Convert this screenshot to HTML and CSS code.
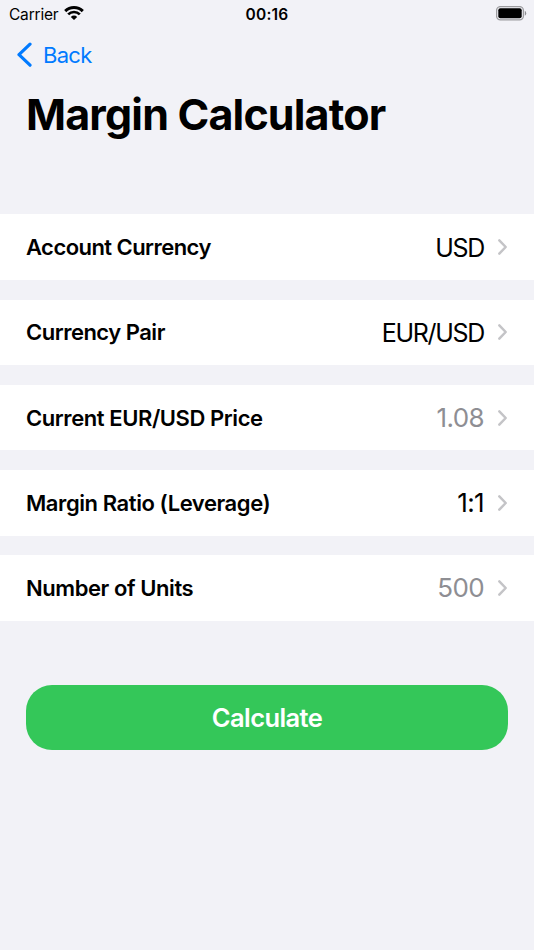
FILE: index.html
```html
<!DOCTYPE html>
<html lang="en">
<head>
    <meta charset="UTF-8">
    <meta name="viewport" content="width=device-width, initial-scale=1.0">
    <title>Margin Calculator</title>
    <link rel="stylesheet" href="styles.css">
</head>
<body>
    <div class="status-bar">
        <div class="carrier">
            <span class="carrier-name">Carrier</span>
            <svg class="wifi" width="20" height="14" viewBox="0 0 20 14">
                <path d="M1.2 5.1a12.6 12.6 0 0 1 17.6 0" fill="none" stroke="#000" stroke-width="3"/>
                <path d="M4.2 8.4a8.2 8.2 0 0 1 11.6 0" fill="none" stroke="#000" stroke-width="2.7"/>
                <path d="M6.8 10.9a4.6 4.6 0 0 1 6.4 0L10 14z"/>
            </svg>
        </div>
        <div class="clock">00:16</div>
        <svg class="battery" width="31" height="15" viewBox="0 0 31 15">
            <rect x="0.6" y="0.6" width="26.8" height="13.3" rx="3.8" fill="none" stroke="#9c9c9f" stroke-width="1.3"/>
            <rect x="2.3" y="2.3" width="23.4" height="9.9" rx="2"/>
            <path d="M28.8 4.8a2.9 2.9 0 0 1 0 5z" fill="#8e8e92"/>
        </svg>
    </div>
    <div class="nav-bar">
        <svg width="16" height="26" viewBox="0 0 16 26">
            <path d="M14 2.2L3 12.7l11 10.5" fill="none" stroke="#007aff" stroke-width="3.2" stroke-linecap="round" stroke-linejoin="round"/>
        </svg>
        <span class="back-label">Back</span>
    </div>
    <h1 class="title">Margin Calculator</h1>

    <div class="fields">
        <div class="field">
            <div class="field-name name-account">Account Currency</div>
            <div class="field-value code">USD</div>
            <svg class="chevron" width="11" height="18" viewBox="0 0 11 18"><path d="M2.3 2.3L8.7 9l-6.4 6.7"/></svg>
        </div>
        <div class="field">
            <div class="field-name name-pair">Currency Pair</div>
            <div class="field-value code">EUR/USD</div>
            <svg class="chevron" width="11" height="18" viewBox="0 0 11 18"><path d="M2.3 2.3L8.7 9l-6.4 6.7"/></svg>
        </div>
        <div class="field">
            <div class="field-name">Current EUR/USD Price</div>
            <div class="field-value placeholder">1.08</div>
            <svg class="chevron" width="11" height="18" viewBox="0 0 11 18"><path d="M2.3 2.3L8.7 9l-6.4 6.7"/></svg>
        </div>
        <div class="field">
            <div class="field-name">Margin Ratio (Leverage)</div>
            <div class="field-value">1:1</div>
            <svg class="chevron" width="11" height="18" viewBox="0 0 11 18"><path d="M2.3 2.3L8.7 9l-6.4 6.7"/></svg>
        </div>
        <div class="field">
            <div class="field-name">Number of Units</div>
            <div class="field-value placeholder">500</div>
            <svg class="chevron" width="11" height="18" viewBox="0 0 11 18"><path d="M2.3 2.3L8.7 9l-6.4 6.7"/></svg>
        </div>
    </div>
    <button class="calculate-btn">Calculate</button>
</body>
</html>
```
FILE: styles.css
```css
* {
    margin: 0;
    padding: 0;
    box-sizing: border-box;
}
body {
    height: 950px;
    background: #f2f2f7;
    font-family: Inter, "Liberation Sans", sans-serif;
    color: #000;
    overflow: hidden;
}
.status-bar {
    display: grid;
    grid-template-columns: 1fr auto 1fr;
    align-items: center;
    height: 28px;
    padding: 0 7px 0 9px;
}
.carrier {
    display: flex;
    align-items: center;
    gap: 6px;
}
.carrier-name {
    font-size: 15.5px;
    letter-spacing: -0.2px;
}
.wifi {
    margin-top: -3px;
}
.clock {
    margin-left: -2px;
    font-size: 15.5px;
    font-weight: 600;
    letter-spacing: 0.2px;
}
.battery {
    justify-self: end;
    margin-top: -2px;
}
.nav-bar {
    display: flex;
    align-items: center;
    gap: 11px;
    height: 54px;
    padding-left: 16px;
    color: #007aff;
}
.back-label {
    margin-top: -1px;
    font-size: 22px;
    letter-spacing: -0.7px;
}
.title {
    height: 64px;
    line-height: 64px;
    padding-left: 26px;
    font-size: 43px;
    font-weight: 700;
    letter-spacing: -0.83px;
    white-space: nowrap;
}
.fields {
    display: flex;
    flex-direction: column;
    gap: 19.5px;
    margin-top: 68.4px;
}
.field {
    display: flex;
    align-items: center;
    height: 65.7px;
    padding: 0 26px;
    background: #fff;
}
.field-name {
    flex: 1;
    font-size: 22px;
    font-weight: 600;
    letter-spacing: -0.42px;
}
.name-account {
    letter-spacing: -0.55px;
}
.name-pair {
    letter-spacing: -0.5px;
}
.field-value {
    margin-right: 13px;
    font-size: 26px;
    letter-spacing: -0.6px;
}
.code {
    padding-top: 1px;
    font-size: 25px;
    letter-spacing: -1.3px;
}
.placeholder {
    color: #8e8e93;
}
.chevron path {
    fill: none;
    stroke: #c4c4c7;
    stroke-width: 2.5;
    stroke-linecap: round;
    stroke-linejoin: round;
}
.calculate-btn {
    display: block;
    width: 482px;
    height: 65px;
    margin: 64px auto 0;
    border: none;
    border-radius: 26px;
    background: #34c759;
    color: #fff;
    font-family: inherit;
    font-size: 25.5px;
    font-weight: 600;
    letter-spacing: -0.6px;
}
```
